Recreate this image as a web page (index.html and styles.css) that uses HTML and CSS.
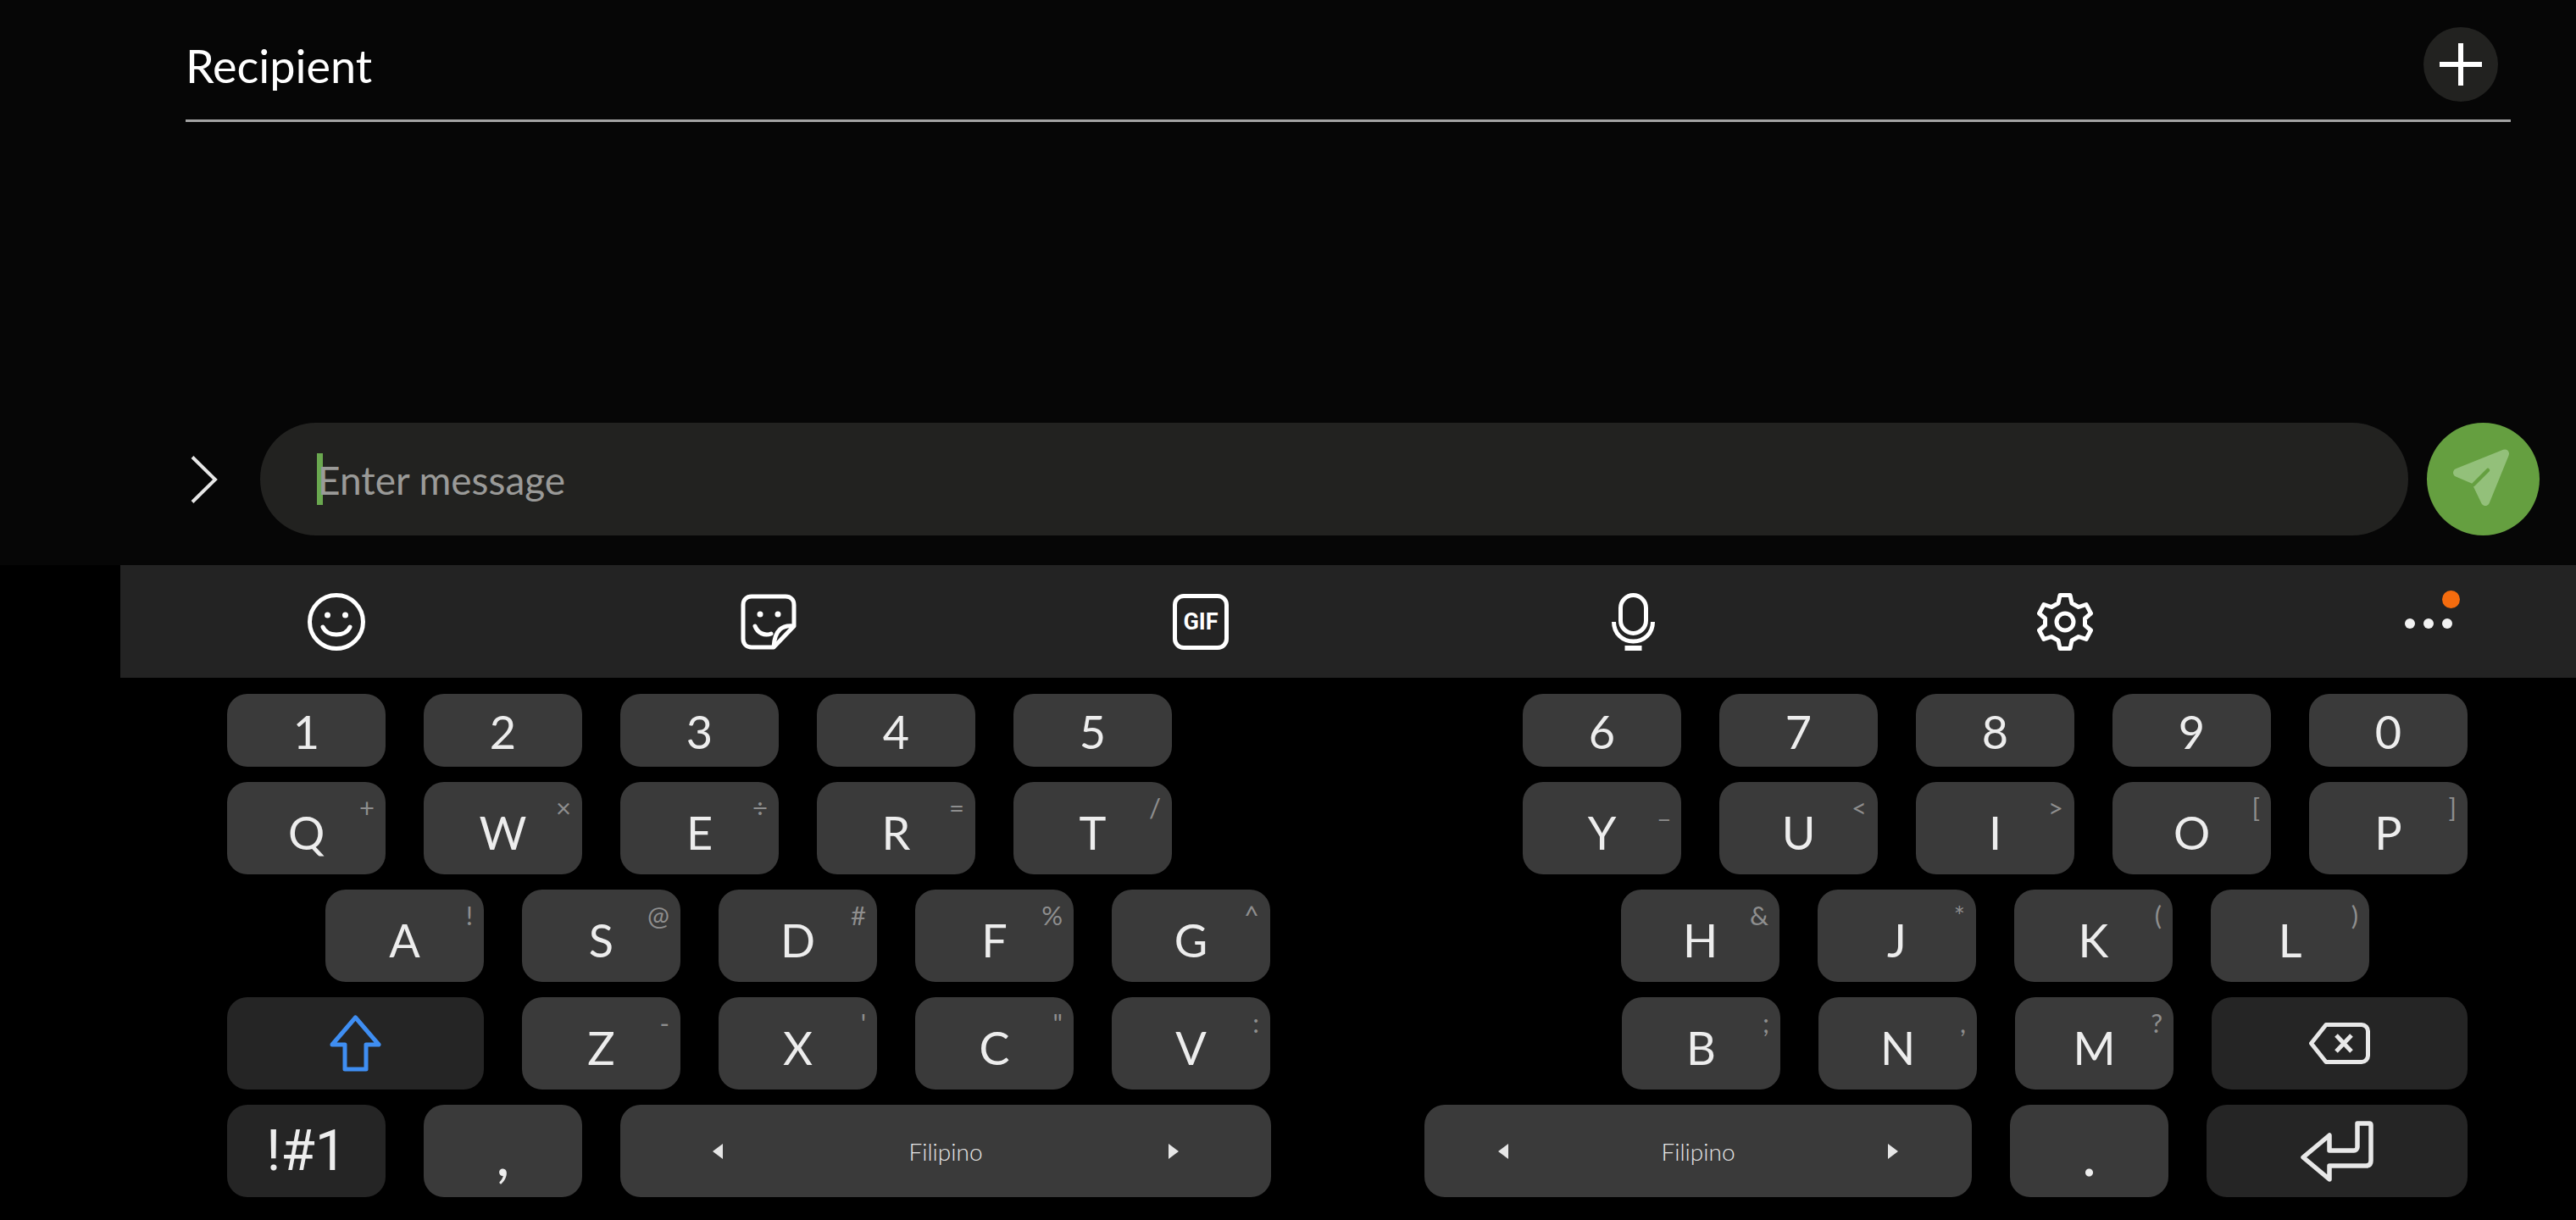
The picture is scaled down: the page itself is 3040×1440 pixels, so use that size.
FILE: index.html
```html
<!DOCTYPE html>
<html lang="en">
<head>
  <meta charset="UTF-8">
  <meta name="viewport" content="width=device-width, initial-scale=1.0">
  <title>New message</title>
  <link rel="stylesheet" href="styles.css">
</head>
<body>
  <!-- recipient row -->
  <div class="recipient-row">
    <div class="recipient-label">Recipient</div>
    <div class="add-button">
      <svg width="50" height="50" viewBox="0 0 50 50"><path d="M25 0V50M0 25H50" stroke="#fff" stroke-width="6"/></svg>
    </div>
  </div>

  <!-- message row -->
  <div class="compose-row">
    <svg class="expand-icon" width="32" height="56" viewBox="0 0 32 56"><path d="M2 1.500L29 28L2 54.500" fill="none" stroke="#e6e6e6" stroke-width="4"/></svg>
    <div class="message-box">
      <span class="caret"></span>
      <span class="placeholder">Enter message</span>
    </div>
    <div class="send-button">
      <svg width="133" height="133" viewBox="0 0 133 133"><path d="M92 36.500L36 59L57 68L69 93Z" fill="#93c07a" stroke="#93c07a" stroke-width="10" stroke-linejoin="round"/><path d="M55 73L72 56" stroke="#659f40" stroke-width="4.500" stroke-linecap="round"/></svg>
    </div>
  </div>

  <!-- keyboard -->
  <div class="keyboard">
    <div class="toolbar">
      <svg class="tool" width="68" height="68" viewBox="0 0 68 68"><circle cx="34" cy="34" r="31.500" fill="none" stroke="#fff" stroke-width="5"/><circle cx="23.500" cy="26" r="3.500" fill="#fff"/><circle cx="44.500" cy="26" r="3.500" fill="#fff"/><path d="M18 40C23 52 45 52 50 40" fill="none" stroke="#fff" stroke-width="5" stroke-linecap="round"/></svg>
      <svg class="tool" width="66" height="66" viewBox="0 0 66 66"><path d="M39 63H13C7 63 3 59 3 53V13C3 7 7 3 13 3H53C59 3 63 7 63 13V38Z" fill="none" stroke="#fff" stroke-width="5" stroke-linejoin="round"/><path d="M63 38C50 36 40 42 39 63" fill="none" stroke="#fff" stroke-width="5"/><circle cx="23" cy="24" r="3.500" fill="#fff"/><circle cx="44" cy="24" r="3.500" fill="#fff"/><path d="M17 38C20 46 28 50 36 47" fill="none" stroke="#fff" stroke-width="5" stroke-linecap="round"/></svg>
      <div class="gif-icon">GIF</div>
      <svg class="tool" width="51" height="68" viewBox="0 0 51 68"><rect x="10.500" y="2.500" width="30" height="45" rx="15" fill="none" stroke="#fff" stroke-width="5"/><path d="M2.500 34C2.500 48 13 57 25.500 57S48.500 48 48.500 34" fill="none" stroke="#fff" stroke-width="5"/><path d="M15.500 65H35.500" stroke="#fff" stroke-width="6"/></svg>
      <svg class="tool" width="66" height="68" viewBox="0 0 66 68"><path d="M27 2.500H39L41 12L49 16.500L58 13.500L63.500 24L56.500 30V38L63.500 44L58 54.500L49 51.500L41 56L39 65.500H27L25 56L17 51.500L8 54.500L2.500 44L9.500 38V30L2.500 24L8 13.500L17 16.500L25 12Z" fill="none" stroke="#fff" stroke-width="5" stroke-linejoin="round"/><circle cx="33" cy="34" r="10" fill="none" stroke="#fff" stroke-width="5"/></svg>
      <div class="more-icon">
        <span class="dot"></span><span class="dot"></span><span class="dot"></span>
        <span class="badge"></span>
      </div>
    </div>

    <div class="keys">
      <div class="half">
        <div class="key-row short">
          <div class="key num">1</div><div class="key num">2</div><div class="key num">3</div><div class="key num">4</div><div class="key num">5</div>
        </div>
        <div class="key-row">
          <div class="key">Q<span class="hint">+</span></div>
          <div class="key">W<span class="hint">×</span></div>
          <div class="key">E<span class="hint">÷</span></div>
          <div class="key">R<span class="hint">=</span></div>
          <div class="key">T<span class="hint">/</span></div>
        </div>
        <div class="key-row inset-left">
          <div class="key">A<span class="hint">!</span></div>
          <div class="key">S<span class="hint">@</span></div>
          <div class="key">D<span class="hint">#</span></div>
          <div class="key">F<span class="hint">%</span></div>
          <div class="key">G<span class="hint">^</span></div>
        </div>
        <div class="key-row">
          <div class="key dark shift">
            <svg width="61" height="67" viewBox="0 0 61 67"><path d="M30.500 3L58 35H43V64H18V35H3Z" fill="none" stroke="#3f8ef2" stroke-width="5" stroke-linejoin="round"/></svg>
          </div>
          <div class="key">Z<span class="hint">-</span></div>
          <div class="key">X<span class="hint">'</span></div>
          <div class="key">C<span class="hint">"</span></div>
          <div class="key">V<span class="hint">:</span></div>
        </div>
        <div class="key-row">
          <div class="key dark symbols">!#1</div>
          <div class="key mark">,</div>
          <div class="key space space-left">
            <span class="tri-left"></span><span class="lang">Filipino</span><span class="tri-right"></span>
          </div>
        </div>
      </div>

      <div class="half right">
        <div class="key-row short">
          <div class="key num">6</div><div class="key num">7</div><div class="key num">8</div><div class="key num">9</div><div class="key num">0</div>
        </div>
        <div class="key-row">
          <div class="key">Y<span class="hint">_</span></div>
          <div class="key">U<span class="hint">&lt;</span></div>
          <div class="key">I<span class="hint">&gt;</span></div>
          <div class="key">O<span class="hint">[</span></div>
          <div class="key">P<span class="hint">]</span></div>
        </div>
        <div class="key-row inset-right">
          <div class="key">H<span class="hint">&amp;</span></div>
          <div class="key">J<span class="hint">*</span></div>
          <div class="key">K<span class="hint">(</span></div>
          <div class="key">L<span class="hint">)</span></div>
        </div>
        <div class="key-row">
          <div class="key">B<span class="hint">;</span></div>
          <div class="key">N<span class="hint">,</span></div>
          <div class="key">M<span class="hint">?</span></div>
          <div class="key dark backspace">
            <svg width="72" height="49" viewBox="0 0 72 49"><path d="M20 2.500H62C66 2.500 69.500 6 69.500 10V39C69.500 43 66 46.500 62 46.500H20L2.500 24.500Z" fill="none" stroke="#e8e8e8" stroke-width="5" stroke-linejoin="round"/><path d="M32 15L50 34M50 15L32 34" stroke="#e8e8e8" stroke-width="5"/></svg>
          </div>
        </div>
        <div class="key-row">
          <div class="key space space-right">
            <span class="tri-left"></span><span class="lang">Filipino</span><span class="tri-right"></span>
          </div>
          <div class="key mark">.</div>
          <div class="key dark enter">
            <svg width="86" height="72" viewBox="0 0 86 72"><path d="M67 3H81C82.500 3 83 4 83 5V47C83 51 81 53 77 53H34V69L3 43L34 17V35H63C65 35 67 33 67 31Z" fill="none" stroke="#e8e8e8" stroke-width="5.500" stroke-linejoin="round"/></svg>
          </div>
        </div>
      </div>
    </div>
  </div>
</body>
</html>
```

FILE: styles.css
```css
html, body {
  margin: 0;
  height: 100%;
}
body {
  width: 3040px;
  height: 1440px;
  overflow: hidden;
  background-color: #060606;
  font-family: "Lato", sans-serif;
  color: #fff;
  display: flex;
  flex-direction: column;
}
.recipient-row {
  height: 141px;
  margin: 0 77px 0 219px;
  border-bottom: 3px solid #a3a3a3;
  display: flex;
  align-items: flex-start;
  justify-content: space-between;
}
.recipient-label {
  font-size: 54px;
  line-height: 66px;
  margin-top: 45px;
}
.add-button {
  width: 88px;
  height: 88px;
  margin: 32px 15px 0 0;
  border-radius: 50%;
  background-color: #222220;
  display: flex;
  align-items: center;
  justify-content: center;
}
.compose-row {
  height: 133px;
  margin: 355px 43px 0 225px;
  display: flex;
  align-items: center;
}
.expand-icon {
  margin-right: 50px;
}
.message-box {
  flex: 1;
  height: 133px;
  box-sizing: border-box;
  padding-left: 67px;
  border-radius: 66px;
  background-color: #222220;
  display: flex;
  align-items: center;
}
.caret {
  width: 7px;
  height: 61px;
  background-color: #6aa84f;
}
.placeholder {
  margin: 2px 0 0 -6px;
  font-size: 46px;
  color: #9a9a98;
}
.send-button {
  width: 133px;
  height: 133px;
  margin-left: 22px;
  border-radius: 50%;
  background-color: #659f40;
}
.send-button svg {
  display: block;
}
.keyboard {
  flex: 1;
  margin-top: 35px;
  background-color: #000;
  padding-left: 142px;
}
.toolbar {
  height: 133px;
  background-color: #232323;
  display: grid;
  grid-template-columns: repeat(5, 510px) 1fr;
  align-items: center;
  justify-items: center;
}
.tool {
  display: block;
}
.gif-icon {
  width: 66px;
  height: 66px;
  box-sizing: border-box;
  border: 5px solid #fff;
  border-radius: 13px;
  font-family: "Roboto", sans-serif;
  font-size: 27px;
  font-weight: 700;
  line-height: 56px;
  text-align: center;
}
.more-icon {
  justify-self: start;
  width: 56px;
  height: 12px;
  margin: 5px 0 0 146px;
  display: flex;
  justify-content: space-between;
  position: relative;
}
.dot {
  width: 12px;
  height: 12px;
  border-radius: 50%;
  background-color: #f2f2f2;
}
.badge {
  position: absolute;
  top: -33px;
  left: 44px;
  width: 21px;
  height: 21px;
  border-radius: 50%;
  background-color: #f56c0e;
}
.keys {
  display: flex;
  justify-content: space-between;
  padding: 19px 128px 0 126px;
}
.half {
  width: 1232px;
  display: flex;
  flex-direction: column;
  gap: 18px;
}
.half.right {
  align-items: flex-end;
}
.key-row {
  height: 109px;
  display: flex;
  gap: 45px;
}
.key-row.short {
  height: 86px;
}
.key-row.inset-left {
  padding-left: 116px;
}
.key-row.inset-right {
  padding-right: 116px;
}
.key {
  width: 187px;
  border-radius: 24px;
  background-color: #3a3a3a;
  color: #ededed;
  font-size: 54px;
  line-height: 109px;
  padding-top: 5px;
  box-sizing: border-box;
  text-align: center;
  position: relative;
}
.key.num {
  line-height: 86px;
  padding-top: 2px;
}
.hint {
  position: absolute;
  top: 0;
  right: 13px;
  font-size: 31px;
  line-height: 60px;
  color: #8e8e8e;
}
.key.dark {
  background-color: #252525;
  padding-top: 0;
  display: flex;
  align-items: center;
  justify-content: center;
}
.key.shift {
  width: 303px;
}
.key.backspace {
  width: 302px;
}
.key.enter {
  width: 308px;
}
.key.symbols {
  font-family: "Liberation Sans Narrow", "Roboto", sans-serif;
  font-size: 66px;
}
.key.mark {
  font-size: 72px;
  line-height: 112px;
  padding-top: 0;
}
.key.space {
  padding-top: 0;
  display: flex;
  align-items: center;
  justify-content: space-between;
}
.key.space-left {
  width: 768px;
  padding: 0 109px;
}
.key.space-right {
  width: 646px;
  padding: 0 87px;
}
.lang {
  font-size: 28px;
  font-weight: 300;
  line-height: 40px;
  color: #e6e6e6;
}
.tri-left, .tri-right {
  width: 0;
  height: 0;
  border-top: 9px solid transparent;
  border-bottom: 9px solid transparent;
}
.tri-left {
  border-right: 12px solid #e6e6e6;
}
.tri-right {
  border-left: 12px solid #e6e6e6;
}
```
